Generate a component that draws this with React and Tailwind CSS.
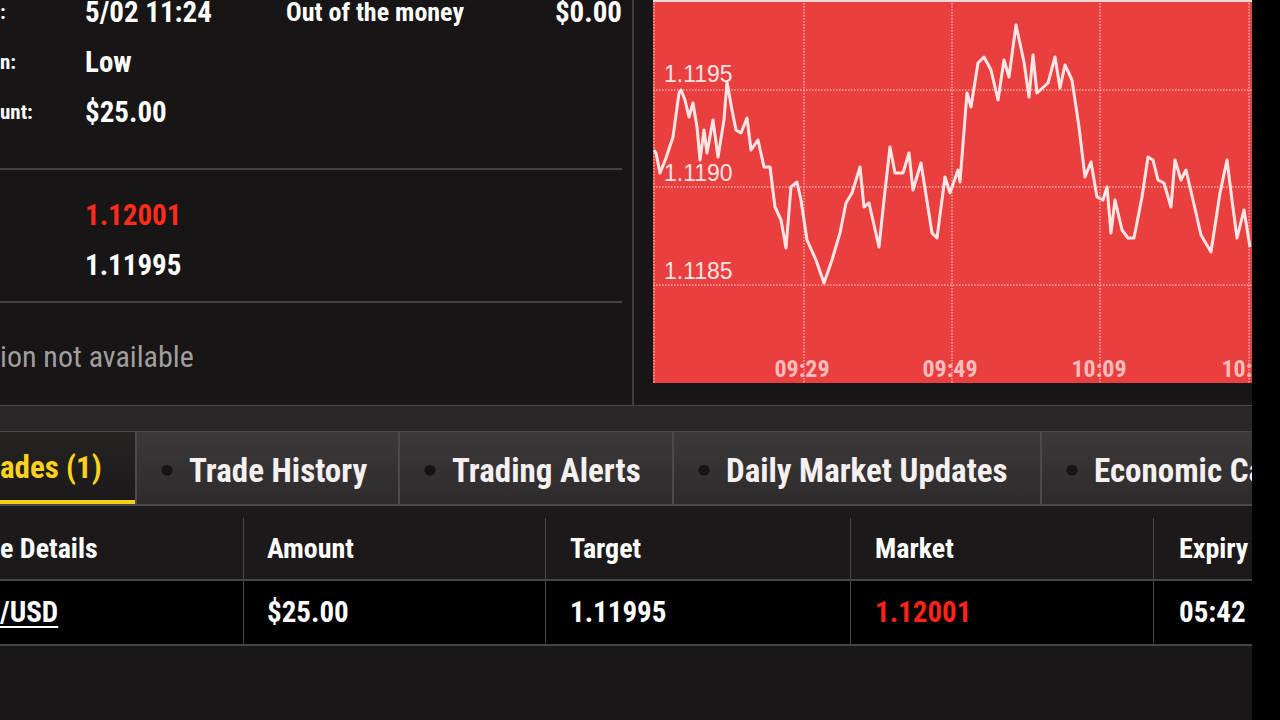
import React from "react";

const pts = [
  [654, 150], [656, 153], [660, 173], [666, 158], [673, 137], [679, 93], [681, 90], [685, 100], [689, 117],
  [693, 103], [697, 127], [700, 160], [704, 130], [707, 153], [713, 120], [718, 157], [724, 120],
  [727, 82], [732, 110], [736, 130], [741, 133], [747, 118], [751, 150], [758, 140], [764, 167],
  [770, 167], [775, 207], [781, 220], [786, 248], [791, 187], [797, 182], [801, 200], [807, 240],
  [816, 260], [824, 283], [832, 260], [840, 233], [846, 203], [852, 193], [860, 167], [864, 207],
  [869, 203], [879, 247], [884, 200], [890, 147], [895, 173], [903, 173], [909, 153], [913, 190],
  [921, 163], [932, 233], [937, 238], [945, 177], [950, 193], [958, 170], [960, 182], [967, 93],
  [971, 107], [978, 63], [984, 57], [991, 70], [998, 100], [1004, 60], [1009, 77], [1016, 25],
  [1024, 62], [1029, 97], [1033, 55], [1037, 93], [1048, 83], [1055, 57], [1060, 88], [1065, 65],
  [1072, 80], [1079, 127], [1085, 177], [1091, 162], [1097, 197], [1103, 200], [1107, 187],
  [1111, 233], [1115, 200], [1122, 230], [1128, 238], [1134, 238], [1142, 197], [1148, 157],
  [1153, 160], [1158, 180], [1164, 183], [1171, 207], [1175, 160], [1181, 180], [1186, 170],
  [1193, 200], [1201, 235], [1211, 252], [1220, 193], [1227, 160], [1232, 200], [1237, 238],
  [1244, 210], [1250, 247],
];

function Chart() {
  const d = pts.map(([x, y], i) => `${i ? "L" : "M"}${x - 653} ${y}`).join(" ");
  return (
    <div className="h-[383px] bg-[#e9403f] border-t-2 border-[#f6d8d8]">
      <svg width="599" height="381" viewBox="0 2 599 381" className="block">
        <g stroke="#f7a9a9" strokeWidth="1.5" strokeDasharray="1.5 1.5">
          <line x1="1" y1="0" x2="1" y2="383" />
          <line x1="0" y1="90" x2="599" y2="90" />
          <line x1="0" y1="187" x2="599" y2="187" />
          <line x1="0" y1="285" x2="599" y2="285" />
          <line x1="151" y1="0" x2="151" y2="383" />
          <line x1="299" y1="0" x2="299" y2="383" />
          <line x1="447" y1="0" x2="447" y2="383" />
          <line x1="596" y1="0" x2="596" y2="383" />
        </g>
        <g fill="#fde4e4" fontSize="23" fontFamily="'Liberation Sans', Arial, sans-serif">
          <text x="11" y="82">1.1195</text>
          <text x="11" y="181">1.1190</text>
          <text x="11" y="279">1.1185</text>
        </g>
        <g fill="#f7bcbc" fontSize="24" fontWeight="700" textAnchor="middle" fontFamily="'Roboto Condensed', Roboto, sans-serif">
          <text x="149" y="377">09:29</text>
          <text x="297" y="377">09:49</text>
          <text x="446" y="377">10:09</text>
          <text x="596" y="377">10:29</text>
        </g>
        <path d={d} fill="none" stroke="#ffe6e6" strokeWidth="3" strokeLinejoin="round" />
      </svg>
    </div>
  );
}

function Dot() {
  return <span className="w-[12px] h-[12px] rounded-full bg-[#151313] shadow-[inset_0_-1px_1px_rgba(255,255,255,0.18)] shrink-0" />;
}

const tabs = [
  { label: "Trade History", w: "w-[263px]" },
  { label: "Trading Alerts", w: "w-[274px]" },
  { label: "Daily Market Updates", w: "w-[368px]" },
  { label: "Economic Calendar", w: "flex-1" },
];

export default function App() {
  return (
    <div className="w-[1280px] h-[720px] overflow-hidden bg-[#171515] flex text-white font-['Roboto_Condensed','DejaVu_Sans_Condensed','Liberation_Sans_Narrow',Roboto,sans-serif]">
      <div className="w-[1252px] flex flex-col">
        {/* top: trade info + chart */}
        <div className="h-[406px] flex border-b border-[#474545]">
          <div className="w-[634px] border-r-2 border-[#3e3c3c] pr-[10px] flex flex-col font-bold">
            <div className="h-[38px] flex items-start leading-[25px]">
              <span className="w-[85px] text-[21px]">:</span>
              <span className="w-[201px] text-[29px]">5/02 11:24</span>
              <span className="flex-1 text-[26px]">Out of the money</span>
              <span className="text-[29px]">$0.00</span>
            </div>
            <div className="h-[50px] flex items-center">
              <span className="w-[85px] text-[21px]">n:</span>
              <span className="text-[29px]">Low</span>
            </div>
            <div className="h-[50px] flex items-center">
              <span className="w-[85px] text-[21px]">unt:</span>
              <span className="text-[29px]">$25.00</span>
            </div>
            <div className="mt-[30px] border-t-2 border-[#454343] pt-[21px] pb-[10px] border-b-2">
              <div className="h-[50px] flex items-center pl-[85px] text-[29px] text-[#ff2b1c]">1.12001</div>
              <div className="h-[50px] flex items-center pl-[85px] text-[29px]">1.11995</div>
            </div>
            <div className="h-[50px] mt-[28px] flex items-center text-[30px] font-normal text-[#a19e9e]">ion not available</div>
          </div>
          <div className="flex-1 pl-[19px]">
            <Chart />
          </div>
        </div>
        <div className="h-[25px] bg-[#292727]" />
        {/* tabs */}
        <div className="h-[75px] flex border-t border-[#4a4848] border-b-2 border-b-[#4a4848] bg-gradient-to-b from-[#3b3939] to-[#2d2b2b]">
          <div className="w-[135px] pt-[5px] flex items-center border-b-4 border-[#f7cf19] bg-gradient-to-b from-[#262323] to-[#1b1919] text-[31px] font-bold text-[#fcd21e] whitespace-nowrap overflow-hidden">
            ades (1)
          </div>
          {tabs.map((t) => (
            <div key={t.label} className={`${t.w} pt-[5px] flex items-center gap-[16px] pl-[24px] border-l-2 border-[#4c4a4a] text-[33px] font-bold whitespace-nowrap overflow-hidden`}>
              <Dot />
              <span className="text-[#f6f0f0]">{t.label}</span>
            </div>
          ))}
        </div>
        {/* open trades table */}
        <div className="pt-[12px] bg-[#1b1919]">
          <div className="h-[63px] flex items-center border-b-2 border-[#474545] text-[28px] font-bold">
            <div className="w-[243px] h-full flex items-center">e Details</div>
            <div className="w-[302px] h-full flex items-center pl-[23px] border-l border-[#4a4848]">Amount</div>
            <div className="w-[305px] h-full flex items-center pl-[24px] border-l border-[#4a4848]">Target</div>
            <div className="w-[303px] h-full flex items-center pl-[24px] border-l border-[#4a4848]">Market</div>
            <div className="flex-1 h-full flex items-center pl-[25px] border-l border-[#4a4848]">Expiry</div>
          </div>
          <div className="h-[65px] flex items-center bg-black border-b-2 border-[#474545] text-[29px] font-bold">
            <div className="w-[243px] h-full flex items-center"><span className="underline underline-offset-4 decoration-2">/USD</span></div>
            <div className="w-[302px] h-full flex items-center pl-[23px] border-l border-[#4a4848]">$25.00</div>
            <div className="w-[305px] h-full flex items-center pl-[24px] border-l border-[#4a4848]">1.11995</div>
            <div className="w-[303px] h-full flex items-center pl-[24px] border-l border-[#4a4848] text-[#ff2216]">1.12001</div>
            <div className="flex-1 h-full flex items-center pl-[25px] border-l border-[#4a4848]">05:42</div>
          </div>
        </div>
        <div className="flex-1 bg-[#191717]" />
      </div>
      <div className="flex-1 bg-black" />
    </div>
  );
}
